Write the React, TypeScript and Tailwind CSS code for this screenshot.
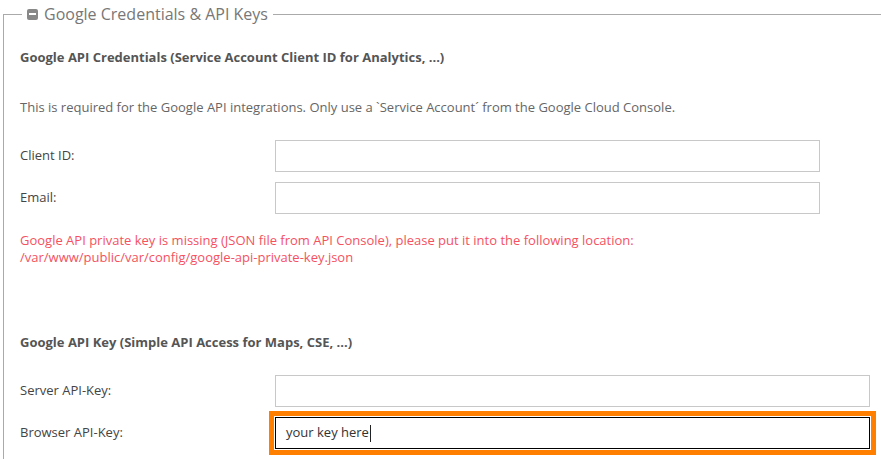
import React from 'react';

const Row = ({
  label,
  wide,
  value,
  focused,
}: {
  label: string;
  wide?: boolean;
  value?: string;
  focused?: boolean;
}) => (
  <div className="flex items-center">
    <label className="w-[255px] shrink-0 text-[13px] text-[#444]">{label}</label>
    <div
      className={`h-8 bg-white flex items-center px-[10px] text-[13px] text-[#333] ${
        wide ? 'w-[595px]' : 'w-[545px]'
      } ${
        focused
          ? 'border border-black outline-[5px] outline-solid outline-[#ff8000] outline-offset-[1px]'
          : 'border border-[#c8c8c8]'
      }`}
    >
      {value}
      {focused && <span className="ml-px inline-block h-[17px] w-px bg-[#222]" />}
    </div>
  </div>
);

const App = () => {
  return (
    <div
      className="w-[881px] h-[459px] bg-white overflow-hidden"
      style={{ fontFamily: '"Open Sans", "Liberation Sans", sans-serif' }}
    >
      <fieldset className="ml-[3px] mt-px border-t border-l border-[#aaa] pl-4 pb-4">
        <legend className="ml-[2px] px-[5px] flex items-center gap-[6px] text-[16px] leading-[26px] text-[#777]">
          <span className="w-[11px] h-[11px] rounded-[2px] bg-[#888] flex items-center justify-center">
            <span className="w-[7px] h-[2px] bg-white" />
          </span>
          Google Credentials &amp; API Keys
        </legend>

        <div className="pt-[21px]">
          <h3 className="text-[13px] leading-[18px] font-bold text-[#555]">
            Google API Credentials (Service Account Client ID for Analytics, ...)
          </h3>
          <p className="mt-[32px] text-[13px] leading-[18px] text-[#666]">
            This is required for the Google API integrations. Only use a `Service Account´ from the Google Cloud Console.
          </p>

          <div className="mt-[24px] flex flex-col gap-[10px]">
            <Row label="Client ID:" />
            <Row label="Email:" />
          </div>

          <p className="mt-[18px] text-[13px] leading-[17px] text-[#f5515f]">
            Google API private key is missing (JSON file from API Console), please put it into the following location:
            <br />
            /var/www/public/var/config/google-api-private-key.json
          </p>

          <h3 className="mt-[67px] text-[13px] leading-[18px] font-bold text-[#555]">
            Google API Key (Simple API Access for Maps, CSE, ...)
          </h3>

          <div className="mt-[24px] flex flex-col gap-[10px]">
            <Row label="Server API-Key:" wide />
            <Row label="Browser API-Key:" wide value="your key here" focused />
          </div>
        </div>
      </fieldset>
    </div>
  );
};

export default App;
